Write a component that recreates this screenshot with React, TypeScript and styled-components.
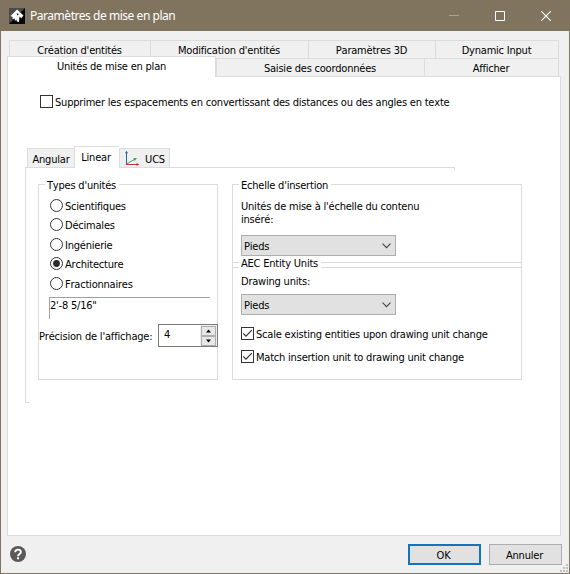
import React from "react";
import styled, { createGlobalStyle } from "styled-components";

const GlobalStyle = createGlobalStyle`
  * { box-sizing: border-box; }
  body {
    margin: 0;
    background: #f0f0f0;
    color: #000;
    font: 11px/16px "DejaVu Sans Condensed", "DejaVu Sans", sans-serif;
    letter-spacing: -0.21px;
    font-kerning: none;
  }
`;

const line = "#dcdcdc";

const Dialog = styled.div`
  width: 570px;
  height: 574px;
  display: flex;
  flex-direction: column;
  border: 1px solid #80745f;
  background: #f0f0f0;
  overflow: hidden;
`;

const TitleBar = styled.header`
  flex: none;
  height: 30px;
  display: flex;
  align-items: center;
  padding-left: 8px;
  background: #80745f;
  color: #fff;
  svg { display: block; flex: none; }
`;

const Title = styled.h1`
  flex: 1;
  margin: 0 0 1px 5px;
  font: 400 12px/16px "Noto Sans", "Open Sans", sans-serif;
  letter-spacing: -0.46px;
  white-space: nowrap;
`;

const WindowButton = styled.div<{ $dim?: boolean }>`
  width: 46px;
  height: 28px;
  display: flex;
  align-items: center;
  justify-content: center;
  color: ${p => (p.$dim ? "#aba495" : "#fff")};
`;

const TabStrip = styled.nav`
  flex: none;
  padding: 9px 10px 0 8px;
`;

const TabRow = styled.div<{ $columns: string }>`
  display: grid;
  grid-template-columns: ${p => p.$columns};
  height: 18px;
  border-right: 1px solid ${line};
`;

const Tab = styled.div`
  height: 18px;
  border: solid ${line};
  border-width: 1px 0 0 1px;
  padding: 2px 1px 0 0;
  text-align: center;
  white-space: nowrap;
`;

const ActiveTab = styled(Tab)`
  position: relative;
  height: 21px;
  margin: -2px 0 0 -2px;
  padding-right: 0;
  border-right-width: 1px;
  background: #fff;
`;

const Pane = styled.main`
  flex: none;
  width: 554px;
  height: 460px;
  margin-left: 6px;
  border: 1px solid ${line};
  background: #fff;
  padding: 18px 0 0 17px;
`;

const Check = styled.label`
  display: flex;
  align-items: flex-start;
  gap: 2px;
  height: 14px;
  white-space: nowrap;
`;

const SpacingOption = styled(Check)`
  margin-left: 15px;
`;

const Box = styled.span`
  flex: none;
  width: 13px;
  height: 13px;
  border: 1px solid #333;
  background: #fff;
  svg { display: block; }
`;

const UnitTabs = styled.nav`
  display: flex;
  align-items: flex-end;
  height: 21px;
  margin: 37px 0 0 2px;
`;

const UnitTab = styled.div<{ $width: number }>`
  width: ${p => p.$width}px;
  height: 19px;
  display: flex;
  align-items: flex-start;
  justify-content: center;
  gap: 5px;
  padding-top: 3px;
  border: solid ${line};
  border-width: 1px 0 0 1px;
  background: #f0f0f0;
  &:last-child { border-right-width: 1px; }
  svg { display: block; margin-top: -2px; }
`;

const ActiveUnitTab = styled(UnitTab)`
  height: 21px;
  padding-right: 2px;
  background: #fff;
`;

const UnitPane = styled.section`
  width: 430px;
  height: 236px;
  border-left: 1px solid ${line};
  background:
    linear-gradient(${line}, ${line}) 0 100% / 3px 1px no-repeat,
    linear-gradient(${line}, ${line}) 0 0 / 49px 1px no-repeat,
    linear-gradient(${line}, ${line}) 93px 0 / 336px 1px no-repeat,
    linear-gradient(${line}, ${line}) 428px 0 / 1px 3px no-repeat,
    linear-gradient(#ededed, #ededed) 429px 0 / 1px 3px no-repeat;
  padding: 17px 0 0 12px;
`;

const Columns = styled.div`
  display: grid;
  grid-template-columns: 180px 290px;
  column-gap: 14px;
`;

const Stack = styled.div`
  display: flex;
  flex-direction: column;
`;

const Group = styled.section<{ $height: number }>`
  height: ${p => p.$height}px;
  border: 1px solid ${line};
`;

const Seam = styled.div`
  height: 4px;
  border: solid ${line};
  border-width: 0 1px;
`;

const Legend = styled.h2`
  position: relative;
  width: max-content;
  height: 14px;
  margin: -7px 0 0 6px;
  padding: 0 3px 0 2px;
  background: #fff;
  font: inherit;
`;

const RadioList = styled.div`
  display: grid;
  grid-template-rows: 19px 20px 19px 20px 14px;
  margin: 7px 0 0 11px;
`;

const Radio = styled.label`
  height: 14px;
  display: flex;
  align-items: flex-start;
  gap: 2px;
  svg { display: block; flex: none; }
`;

const Sample = styled.div`
  width: 161px;
  height: 22px;
  margin: 6px 0 0 10px;
  border: solid #a0a0a0;
  border-width: 1px 0 0 1px;
`;

const PrecisionRow = styled.div`
  display: flex;
  justify-content: space-between;
  align-items: flex-start;
  margin: 5px -1px 0 0;
  height: 23px;
  white-space: nowrap;
`;

const PrecisionLabel = styled.span`
  padding-top: 5px;
  letter-spacing: -0.18px;
`;

const Spinner = styled.div`
  width: 60px;
  height: 23px;
  display: flex;
  border: 1px solid #7a7a7a;
  background: #fff;
  padding-left: 5px;
`;

const SpinValue = styled.span`
  flex: 1;
  padding-top: 2px;
`;

const SpinButtons = styled.div`
  width: 17px;
  display: grid;
  grid-template-rows: 10px 10px;
  padding: 1px 0 0 1px;
  background: #f0f0f0;
`;

const SpinButton = styled.span`
  width: 15px;
  height: 10px;
  border: 1px solid #adadad;
  background: #e8e8e8;
  svg { display: block; margin: auto; }
`;

const ScaleText = styled.p`
  width: 190px;
  height: 26px;
  margin: 7px 0 0 8px;
  padding-top: 1px;
  line-height: 13px;
`;

const FieldLabel = styled.p`
  height: 14px;
  margin: 6px 0 0 8px;
`;

const Select = styled.div<{ $top: number }>`
  width: 155px;
  height: 21px;
  display: flex;
  align-items: center;
  justify-content: space-between;
  margin: ${p => p.$top}px 0 0 8px;
  padding: 0 4px 0 2px;
  border: 1px solid #adadad;
  background: #e1e1e1;
`;

const SelectValue = styled.span`
  padding-top: 2px;
`;

const OptionList = styled.div`
  display: grid;
  row-gap: 9px;
  margin: 12px 0 0 8px;
`;

const Footer = styled.footer`
  flex: 1;
  display: flex;
  padding: 8px 0 0 9px;
`;

const HelpIcon = styled.svg`
  margin: 2px auto 0 0;
`;

const Button = styled.button<{ $primary?: boolean }>`
  width: 73px;
  height: 21px;
  margin-right: ${p => (p.$primary ? 8 : 0)}px;
  padding: 2px 2px 0 0;
  border: ${p => (p.$primary ? "2px solid #1373bd" : "1px solid #adadad")};
  background: #e1e1e1;
  color: inherit;
  font: inherit;
  letter-spacing: inherit;
  text-align: center;
`;

const Grip = styled.svg`
  align-self: flex-end;
  margin-left: -2px;
`;

const Checkbox = ({ checked }: { checked?: boolean }) => (
  <Box>
    {checked && (
      <svg width="11" height="11" viewBox="0 0 11 11">
        <path d="M1.2 5.3 4 8.2 9.8 2.2" fill="none" stroke="#333" strokeWidth="1.2" />
      </svg>
    )}
  </Box>
);

const RadioMark = ({ checked }: { checked: boolean }) => (
  <svg width="13" height="13" viewBox="0 0 13 13">
    <circle cx="6.5" cy="6.5" r="6" fill="#fff" stroke="#333" />
    {checked && <circle cx="6.5" cy="6.5" r="3.4" fill="#2b2b2b" />}
  </svg>
);

const Combo = ({ value, top }: { value: string; top: number }) => (
  <Select $top={top}>
    <SelectValue>{value}</SelectValue>
    <svg width="9" height="6" viewBox="0 0 9 6">
      <path d="M.5 .7 4.5 4.7 8.5 .7" fill="none" stroke="#444" strokeWidth="1.1" />
    </svg>
  </Select>
);

const Arrow = ({ up }: { up?: boolean }) => (
  <svg width="7" height="8" viewBox="0 0 7 8">
    <path d={up ? "M1 5.5 3.5 2.5 6 5.5Z" : "M1 2.5 3.5 5.5 6 2.5Z"} fill="#000" />
  </svg>
);

const AppIcon = () => (
  <svg width="16" height="16" viewBox="0 0 16 16">
    <path d="M0 0H16V16H0Z" fill="#050505" />
    <path d="M0 0H16L0 16Z" fill="#4b4b4b" />
    <path
      d="M1.5 8 8 1.5 14.5 7.5 12.2 10.2 10.5 8.5 10 14 7.8 13.5 7.5 11.5 6 13 5.5 10.5 3.5 11 3.8 9Z"
      fill="#fff"
    />
    <path d="M7.5 5.2 10 6 8.4 7.6Z" fill="#111" />
  </svg>
);

const AxesIcon = () => (
  <svg width="16" height="16" viewBox="0 0 16 16">
    <path d="M2.5 14.5V2" stroke="#256a91" fill="none" />
    <path d="M1 3.2 2.5 .8 4 3.2Z" fill="#256a91" />
    <path d="M2.5 14 11.5 8.8" stroke="#3fa45f" fill="none" />
    <path d="M9.2 8.2 13 8 10.8 11Z" fill="#3fa45f" />
    <path d="M2 14.5H14" stroke="#c8323c" fill="none" />
    <path d="M12.5 13 15.4 14.5 12.5 16Z" fill="#c8323c" />
  </svg>
);

const units = ["Scientifiques", "Décimales", "Ingénierie", "Architecture", "Fractionnaires"];

export default function App() {
  return (
    <>
      <GlobalStyle />
      <Dialog>
        <TitleBar>
          <AppIcon />
          <Title>Paramètres de mise en plan</Title>
          <WindowButton $dim>
            <svg width="10" height="10" viewBox="0 0 10 10">
              <path d="M0 4.5H10" stroke="currentColor" />
            </svg>
          </WindowButton>
          <WindowButton>
            <svg width="10" height="10" viewBox="0 0 10 10">
              <path d="M.5 .5H9.5V9.5H.5Z" fill="none" stroke="currentColor" />
            </svg>
          </WindowButton>
          <WindowButton>
            <svg width="10" height="10" viewBox="0 0 10 10">
              <path d="M.3 .3 9.7 9.7M9.7 .3 .3 9.7" stroke="currentColor" strokeWidth="1.1" />
            </svg>
          </WindowButton>
        </TitleBar>

        <TabStrip>
          <TabRow $columns="141px 158px 127px 1fr">
            <Tab>Création d'entités</Tab>
            <Tab>Modification d'entités</Tab>
            <Tab>Paramètres 3D</Tab>
            <Tab>Dynamic Input</Tab>
          </TabRow>
          <TabRow $columns="207px 208px 1fr">
            <ActiveTab>Unités de mise en plan</ActiveTab>
            <Tab>Saisie des coordonnées</Tab>
            <Tab>Afficher</Tab>
          </TabRow>
        </TabStrip>

        <Pane>
          <SpacingOption>
            <Checkbox />
            Supprimer les espacements en convertissant des distances ou des angles en texte
          </SpacingOption>

          <UnitTabs>
            <UnitTab $width={47}>Angular</UnitTab>
            <ActiveUnitTab $width={45}>Linear</ActiveUnitTab>
            <UnitTab $width={51}>
              <AxesIcon />
              UCS
            </UnitTab>
          </UnitTabs>

          <UnitPane>
            <Columns>
              <Group $height={196}>
                <Legend>Types d'unités</Legend>
                <RadioList>
                  {units.map(u => (
                    <Radio key={u}>
                      <RadioMark checked={u === "Architecture"} />
                      {u}
                    </Radio>
                  ))}
                </RadioList>
                <Sample>2'-8 5/16"</Sample>
                <PrecisionRow>
                  <PrecisionLabel>Précision de l'affichage:</PrecisionLabel>
                  <Spinner>
                    <SpinValue>4</SpinValue>
                    <SpinButtons>
                      <SpinButton><Arrow up /></SpinButton>
                      <SpinButton><Arrow /></SpinButton>
                    </SpinButtons>
                  </Spinner>
                </PrecisionRow>
              </Group>
              <Stack>
                <Group $height={79}>
                  <Legend>Echelle d'insertion</Legend>
                  <ScaleText>Unités de mise à l'échelle du contenu inséré:</ScaleText>
                  <Combo value="Pieds" top={10} />
                </Group>
                <Seam>
                  <Legend>AEC Entity Units</Legend>
                </Seam>
                <Group $height={113}>
                  <FieldLabel>Drawing units:</FieldLabel>
                  <Combo value="Pieds" top={6} />
                  <OptionList>
                    <Check>
                      <Checkbox checked />
                      Scale existing entities upon drawing unit change
                    </Check>
                    <Check>
                      <Checkbox checked />
                      Match insertion unit to drawing unit change
                    </Check>
                  </OptionList>
                </Group>
              </Stack>
            </Columns>
          </UnitPane>
        </Pane>

        <Footer>
          <HelpIcon width="16" height="16" viewBox="0 0 16 16">
            <circle cx="8" cy="8" r="8" fill="#5a5a5a" />
            <path
              d="M5.2 6.2C5.2 2.7 10.9 2.8 10.9 6 10.9 7.9 8 8.1 8 10.2"
              fill="none"
              stroke="#fff"
              strokeWidth="1.9"
            />
            <path d="M7 11.3H9V13.2H7Z" fill="#fff" />
          </HelpIcon>
          <Button $primary>OK</Button>
          <Button>Annuler</Button>
          <Grip width="9" height="9" viewBox="0 0 9 9">
            <path d="M6 0H8V2H6ZM6 3H8V5H6ZM3 3H5V5H3ZM6 6H8V8H6ZM3 6H5V8H3ZM0 6H2V8H0Z" fill="#bfbfbf" />
          </Grip>
        </Footer>
      </Dialog>
    </>
  );
}
